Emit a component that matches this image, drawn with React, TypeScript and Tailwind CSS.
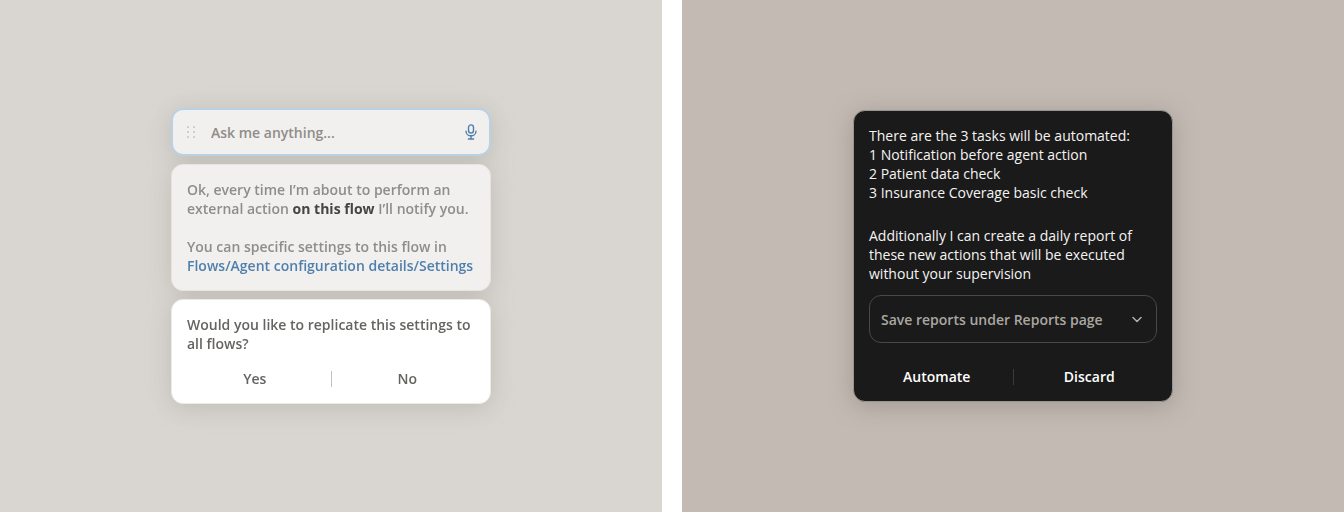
import { useState } from "react";

function GripIcon() {
  return (
    <svg width="10" height="14" viewBox="0 0 10 14" fill="#cbc9c6" aria-hidden="true">
      {[1, 6, 11].map(y => (
        <g key={y}>
          <rect x="2" y={y} width="2" height="2" rx="0.4" />
          <rect x="8" y={y} width="2" height="2" rx="0.4" />
        </g>
      ))}
    </svg>
  );
}

function MicIcon() {
  return (
    <svg width="12" height="16" viewBox="0 0 12 16" fill="none" stroke="#4f7fac" strokeWidth="1.4" strokeLinecap="round" aria-hidden="true">
      <rect x="3.5" y="0.9" width="5" height="8.2" rx="2.5" />
      <path d="M1 7.2a5 4.6 0 0 0 10 0" />
      <path d="M6 11.8V15M3.4 15h5.2" />
    </svg>
  );
}

function ChevronIcon() {
  return (
    <svg width="10" height="8" viewBox="0 0 10 8" fill="none" stroke="#b3b0aa" strokeWidth="1.5" strokeLinecap="round" strokeLinejoin="round" aria-hidden="true">
      <path d="M1 2.5l4 4 4-4" />
    </svg>
  );
}

function AssistantPanel() {
  const [prompt, setPrompt] = useState("");

  return (
    <section className="flex flex-1 flex-col items-center justify-center bg-[#d9d6d1]">
      <div className="flex w-full max-w-80 flex-col gap-2 font-semibold drop-shadow-[0_4px_12px_rgba(112,109,98,0.24)]">
        {/* Prompt */}
        <div className="flex h-12 items-center rounded-xl border-2 border-[#b9d1e5] bg-[#f1f0ee] px-3">
          <GripIcon />
          <input
            type="text"
            aria-label="Ask me anything"
            value={prompt}
            onChange={e => setPrompt(e.target.value)}
            placeholder="Ask me anything..."
            className="ml-4 min-w-0 flex-1 bg-transparent text-[#5c5a57] placeholder-[#8f8d89] outline-none"
          />
          <button type="button" aria-label="Dictate">
            <MicIcon />
          </button>
        </div>

        {/* Reply */}
        <div className="rounded-xl border border-[#e6e4e1] bg-[#f1f0ee] p-[15px] text-[#8f8d89]">
          <p>
            Ok, every time I’m about to perform an external action{" "}
            <strong className="font-bold text-[#454442]">on this flow</strong> I’ll notify you.
          </p>
          <p className="mt-[19px]">
            You can specific settings to this flow in{" "}
            <a href="#settings" className="whitespace-nowrap text-[#4f7fac]">Flows/Agent configuration details/Settings</a>
          </p>
        </div>

        {/* Follow-up question */}
        <div className="rounded-xl border border-[#ecebe8] bg-white p-[15px] text-[#666461]">
          <p>Would you like to replicate this settings to all flows?</p>
          <div className="mt-4 flex items-center">
            <button type="button" className="flex-1 pr-2">Yes</button>
            <span className="h-4 w-px bg-[#c4c2bf]" />
            <button type="button" className="flex-1 pl-2">No</button>
          </div>
        </div>
      </div>
    </section>
  );
}

function AutomationPanel() {
  return (
    <section className="flex flex-1 flex-col items-center justify-center bg-[#c4bab4]">
      <div className="w-full max-w-80 rounded-xl border border-[#99958e] bg-[#1a1a1a] p-[15px] text-[#f5f4f2] shadow-[0_4px_24px_rgba(104,107,92,0.4)]">
        <p>There are the 3 tasks will be automated:</p>
        <ul>
          <li>1 Notification before agent action</li>
          <li>2 Patient data check</li>
          <li>3 Insurance Coverage basic check</li>
        </ul>
        <p className="mt-6">
          Additionally I can create a daily report of these new actions that will be executed without your supervision
        </p>

        {/* Report destination */}
        <div className="mt-3 grid items-center">
          <select
            aria-label="Report destination"
            className="col-start-1 row-start-1 h-12 w-full appearance-none rounded-xl border border-[#484846] bg-[#1a1a1a] px-[11px] font-semibold text-[#aaa7a1]"
          >
            <option>Save reports under Reports page</option>
          </select>
          <div className="pointer-events-none col-start-1 row-start-1 mr-[15px] justify-self-end">
            <ChevronIcon />
          </div>
        </div>

        <div className="mt-6 flex items-center font-semibold text-white">
          <button type="button" className="flex-1 pr-2">Automate</button>
          <span className="h-4 w-px bg-[#3a3a39]" />
          <button type="button" className="flex-1 pl-2">Discard</button>
        </div>
      </div>
    </section>
  );
}

export default function App() {
  return (
    <main className="flex min-h-screen gap-5 bg-white font-['Open_Sans','Noto_Sans',sans-serif] text-sm leading-[19px]">
      <AssistantPanel />
      <AutomationPanel />
    </main>
  );
}
